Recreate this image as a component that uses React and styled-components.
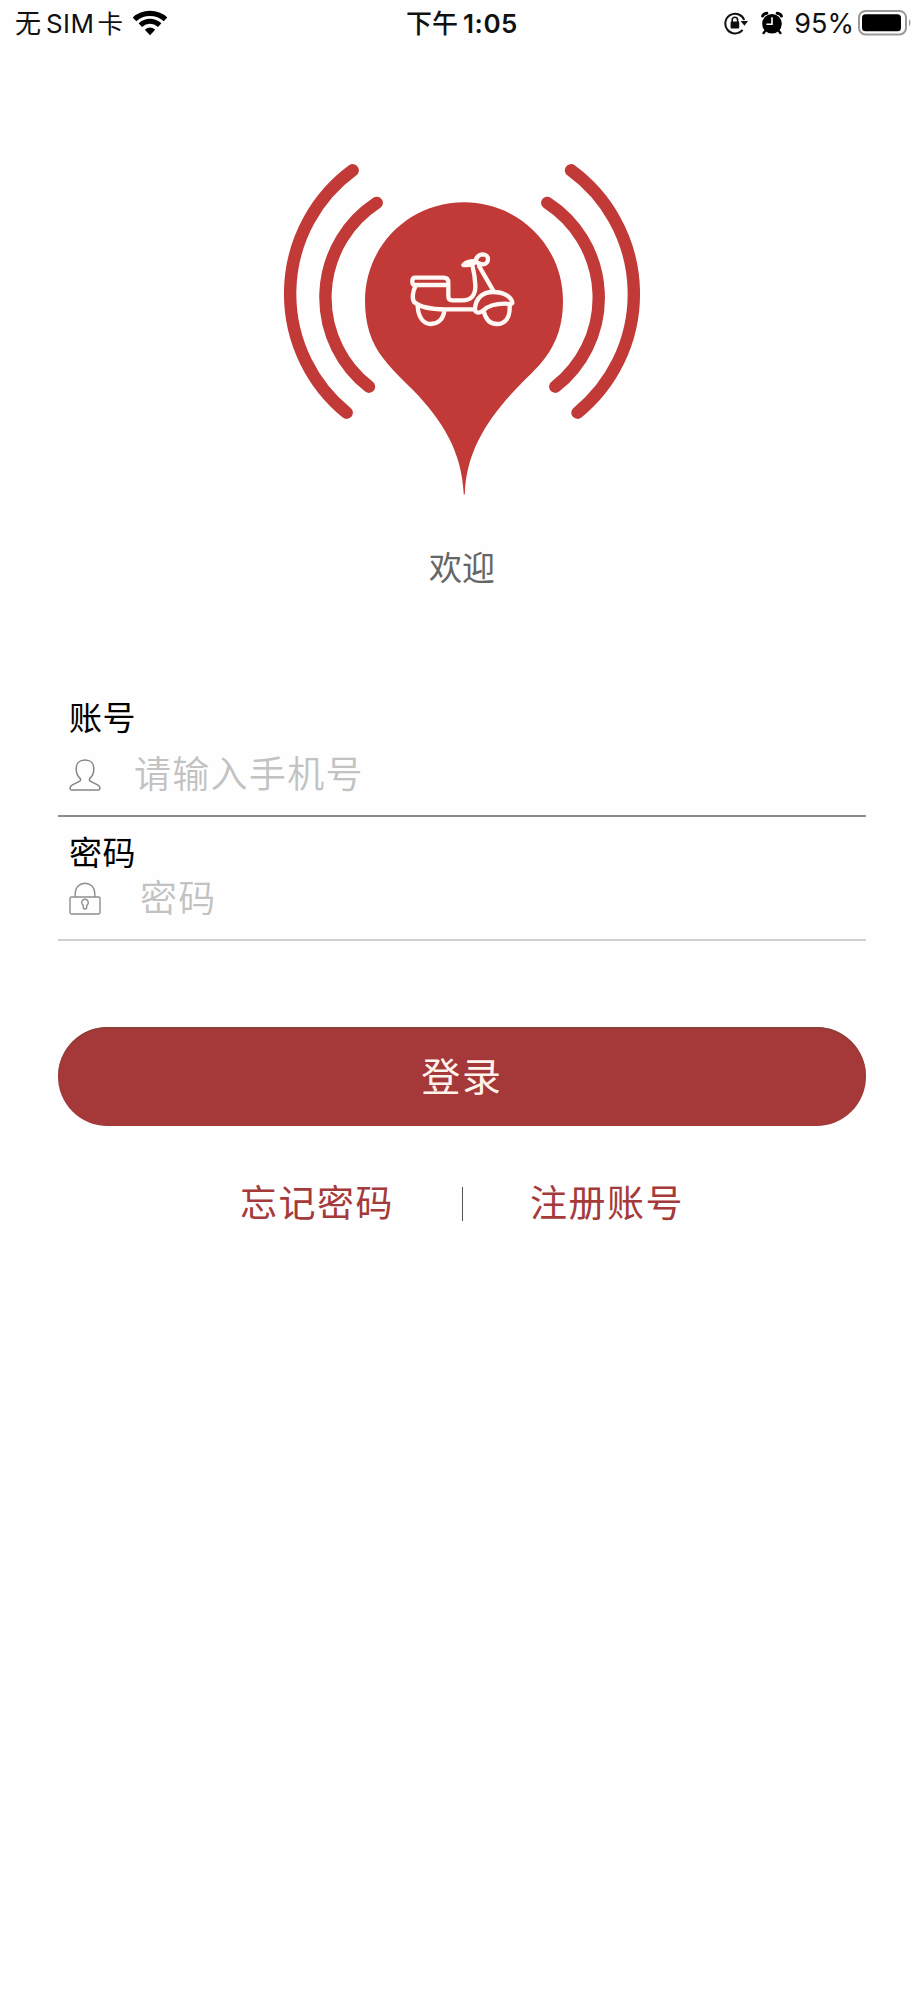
import React from 'react';
import styled, { createGlobalStyle } from 'styled-components';

const GlobalStyle = createGlobalStyle`
  * {
    box-sizing: border-box;
  }

  body {
    margin: 0;
    background: #fefefe;
    font-family: Inter, "Noto Sans CJK SC", sans-serif;
  }
`;

const Page = styled.div`
  width: 924px;
  min-height: 2000px;
  display: flex;
  flex-direction: column;
  align-items: center;
`;

const StatusBar = styled.div`
  width: 100%;
  height: 48px;
  padding: 0 12px 0 15px;
  display: grid;
  grid-template-columns: 1fr auto 1fr;
  align-items: center;
  color: #111;
  line-height: 48px;
`;

const StatusSide = styled.div`
  display: flex;
  align-items: center;
  justify-content: ${(p) => (p.$end ? 'flex-end' : 'flex-start')};

  svg {
    flex: none;
    display: block;
    margin-bottom: 2px;
  }
`;

const StatusText = styled.span`
  font-size: ${(p) => p.$size || 26}px;
  font-weight: ${(p) => p.$weight || 400};
  letter-spacing: ${(p) => p.$spacing || 0}px;
  margin-left: ${(p) => p.$left || 0}px;
  white-space: nowrap;
`;

const Gap = styled.span`
  flex: none;
  width: ${(p) => p.$width}px;
`;

const Clock = styled.div`
  display: flex;
  margin-right: 3px;
`;

const Logo = styled.svg`
  display: block;
  width: 380px;
  height: 350px;
  margin: 102px 4px 0 0;
`;

const Welcome = styled.div`
  margin-top: 44px;
  height: 48px;
  line-height: 48px;
  font-size: 33px;
  color: #666;
`;

const Form = styled.div`
  width: 808px;
  margin-top: 102px;
`;

const Field = styled.div`
  height: ${(p) => p.$height}px;
  padding: ${(p) => p.$top || 0}px 0 0 11px;
  border-bottom: 2px solid ${(p) => p.$line};
`;

const Label = styled.div`
  height: 48px;
  line-height: 48px;
  font-size: 33px;
  letter-spacing: 0.5px;
  color: #000;
`;

const InputRow = styled.div`
  display: flex;
  align-items: center;
  height: ${(p) => p.$height}px;

  svg {
    display: block;
    flex: none;
  }
`;

const Placeholder = styled.span`
  margin-left: ${(p) => p.$left}px;
  padding-top: ${(p) => p.$drop || 0}px;
  font-size: 37px;
  font-weight: 350;
  letter-spacing: 1.3px;
  line-height: 48px;
  color: #c2c2c2;
`;

const LoginButton = styled.button`
  display: block;
  width: 808px;
  height: 99px;
  margin-top: 86px;
  padding: 0;
  border: 0;
  border-radius: 50px;
  background: #a53839;
  box-shadow: inset 0 2px 1px #8f4038;
  color: #fff3ec;
  font-family: inherit;
  font-size: 39px;
  font-weight: 400;
  letter-spacing: 1.7px;
  line-height: 99px;
`;

const Links = styled.div`
  display: flex;
  align-items: center;
  margin-top: 52px;
  height: 52px;
`;

const TextLink = styled.a`
  width: 154px;
  font-size: 37px;
  letter-spacing: 1.5px;
  line-height: 52px;
  white-space: nowrap;
  color: #a53a3b;
`;

const Divider = styled.span`
  width: 1px;
  height: 34px;
  margin: 0 67px 0 68px;
  background: #555;
`;

const WifiIcon = () => (
  <svg width="36" height="27" viewBox="0 0 36 27" fill="none" stroke="#000">
    <path d="M2.5 9.4 C11 1.4 25 1.4 33.5 9.4" strokeWidth="5.2" />
    <path d="M8.3 15.2 C14 10 22 10 27.7 15.2" strokeWidth="5" />
    <path d="M12.8 19.8 Q18 15.4 23.2 19.8 L18 25.3 Z" fill="#000" stroke="none" />
  </svg>
);

const RotationLockIcon = () => (
  <svg width="24" height="24" viewBox="0 0 24 24" fill="none" stroke="#111">
    <path d="M18.6 18.9 A9.8 9.8 0 1 1 20.2 9" strokeWidth="2" />
    <path d="M16.6 10 H24 L20.4 14.8 Z" fill="#111" stroke="none" />
    <path d="M8.2 11 V9 A2.7 2.7 0 0 1 13.6 9 V11" strokeWidth="1.6" />
    <rect x="6.6" y="10.6" width="8.6" height="7" rx="1" fill="#111" stroke="none" />
  </svg>
);

const AlarmIcon = () => (
  <svg width="22" height="24" viewBox="0 0 22 24" fill="none">
    <circle cx="11" cy="12.8" r="9.8" fill="#000" />
    <path d="M1.6 5 Q2.6 2.6 5.8 2.2" stroke="#000" strokeWidth="3" strokeLinecap="round" />
    <path d="M16.2 2.2 Q19.4 2.6 20.4 5" stroke="#000" strokeWidth="3" strokeLinecap="round" />
    <path d="M4.6 19.6 L2.6 22 M17.4 19.6 L19.4 22" stroke="#000" strokeWidth="2.4" strokeLinecap="round" />
    <path d="M11 6.2 V13.2 H5.4" stroke="#fff" strokeWidth="1.6" />
  </svg>
);

const BatteryIcon = () => (
  <svg width="54" height="26" viewBox="0 0 54 26">
    <rect x="1" y="1" width="47" height="23.4" rx="6.5" fill="none" stroke="#999" strokeWidth="2" />
    <rect x="4" y="4.3" width="39" height="17" rx="3.5" fill="#000" />
    <path d="M51 9 Q54 12.7 51 16.6 Z" fill="#999" />
  </svg>
);

const UserIcon = () => (
  <svg width="32" height="32" viewBox="0 0 32 32" fill="none" stroke="#858585" strokeWidth="1.5">
    <path d="M16 1 C10.4 1 7.2 4.6 7.2 9.4 C7.2 14 8.6 17.4 11.4 19.6 Q12 21.6 10.4 22.4 L3.4 25.8 Q1 27 1 29.6 Q1 31 2.6 31 H29.4 Q31 31 31 29.6 Q31 27 28.6 25.8 L21.6 22.4 Q20 21.6 20.6 19.6 C23.4 17.4 24.8 14 24.8 9.4 C24.8 4.6 21.6 1 16 1 Z" />
  </svg>
);

const LockIcon = () => (
  <svg width="32" height="33" viewBox="0 0 32 33" fill="none" stroke="#8f8f8f" strokeWidth="1.4">
    <rect x="1" y="15" width="30" height="17" rx="1.4" />
    <path d="M6.2 15 V11 A9.8 9.8 0 0 1 25.8 11 V15" />
    <path d="M14.3 23.4 A3.3 3.3 0 1 1 17.7 23.4 V26 Q16 28 14.3 26 Z" />
  </svg>
);

const BrandLogo = () => (
  <Logo viewBox="270 150 380 350">
    <g fill="none" stroke="#c13a37" strokeWidth="12.4" strokeLinecap="round">
      <path d="M352.7 170.3 A153.2 153.2 0 0 0 346.7 412.7" />
      <path d="M376.7 202.9 A113 113 0 0 0 369 386.7" />
      <path d="M571 170.3 A153.2 153.2 0 0 1 577.5 412.7" />
      <path d="M547.3 202.9 A113 113 0 0 1 555.3 386.7" />
    </g>
    <path
      fill="#c13a37"
      d="M464 202.3 C409 202.3 365 246 365 301 C365 324 371 343 383 358 C391 369 402 379 413 390 C443 421 462 452 463.8 494.5 H464.8 C466 452 487 420 515 390 C526 378 537 369 545 358 C557 342 563 324 563 301 C563 246 519 202.3 464 202.3 Z"
    />
    {/* scooter */}
    <g
      transform="translate(395 240) scale(0.33333)"
      fill="none"
      stroke="#fff8f4"
      strokeWidth="13"
      strokeLinecap="round"
      strokeLinejoin="round"
    >
      <path d="M160 135 H58 Q52 135 52 124 Q52 113 60 113 H146 Q160 113 160 128 V168 Q160 181 172 181 H202 C230 181 242 164 241 136 C240 112 237 96 233 80" />
      <path d="M62 137 C54 152 50 174 57 186 C76 202 110 208 150 208 H236" />
      <path d="M68 198 C70 236 88 252 107 252 C128 252 146 238 148 210" />
      <path d="M252 78 L296 154" />
      <path d="M240 208 C241 176 262 156 294 156 C326 156 350 170 352 188 C348 196 340 191 330 191 C294 191 276 200 264 212 C252 222 240 218 240 208 Z" />
      <path d="M266 213 C272 240 286 252 306 252 C330 252 346 234 344 196" />
      <path d="M205 75 C212 66 228 62 242 64 C238 74 222 76 205 75 Z" fill="#fff8f4" />
      <path d="M242 62 C246 46 256 43 264 43 C284 44 284 71 264 73 C256 73 248 70 242 64 Z" />
    </g>
  </Logo>
);

const App = () => {
  return (
    <>
      <GlobalStyle />
      <Page>
        <StatusBar>
          <StatusSide>
            <StatusText>无</StatusText>
            <StatusText $left={5} $spacing={0.4}>SIM</StatusText>
            <StatusText $left={3} $size={25.5}>卡</StatusText>
            <Gap $width={9} />
            <WifiIcon />
          </StatusSide>
          <Clock>
            <StatusText $weight={500}>下午</StatusText>
            <StatusText $weight={600} $left={5} $spacing={0.5}>1:05</StatusText>
          </Clock>
          <StatusSide $end>
            <RotationLockIcon />
            <Gap $width={13} />
            <AlarmIcon />
            <StatusText $size={27} $left={11}>95%</StatusText>
            <Gap $width={4} />
            <BatteryIcon />
          </StatusSide>
        </StatusBar>

        <BrandLogo />
        <Welcome>欢迎</Welcome>

        <Form>
          <Field $height={123} $line="#8c8c8c">
            <Label>账号</Label>
            <InputRow $height={66}>
              <UserIcon />
              <Placeholder $left={33}>请输入手机号</Placeholder>
            </InputRow>
          </Field>
          <Field $height={124} $line="#d0d0d0" $top={12}>
            <Label>密码</Label>
            <InputRow $height={42}>
              <LockIcon />
              <Placeholder $left={39} $drop={2}>密码</Placeholder>
            </InputRow>
          </Field>
        </Form>

        <LoginButton>登录</LoginButton>

        <Links>
          <TextLink>忘记密码</TextLink>
          <Divider />
          <TextLink>注册账号</TextLink>
        </Links>
      </Page>
    </>
  );
};

export default App;
